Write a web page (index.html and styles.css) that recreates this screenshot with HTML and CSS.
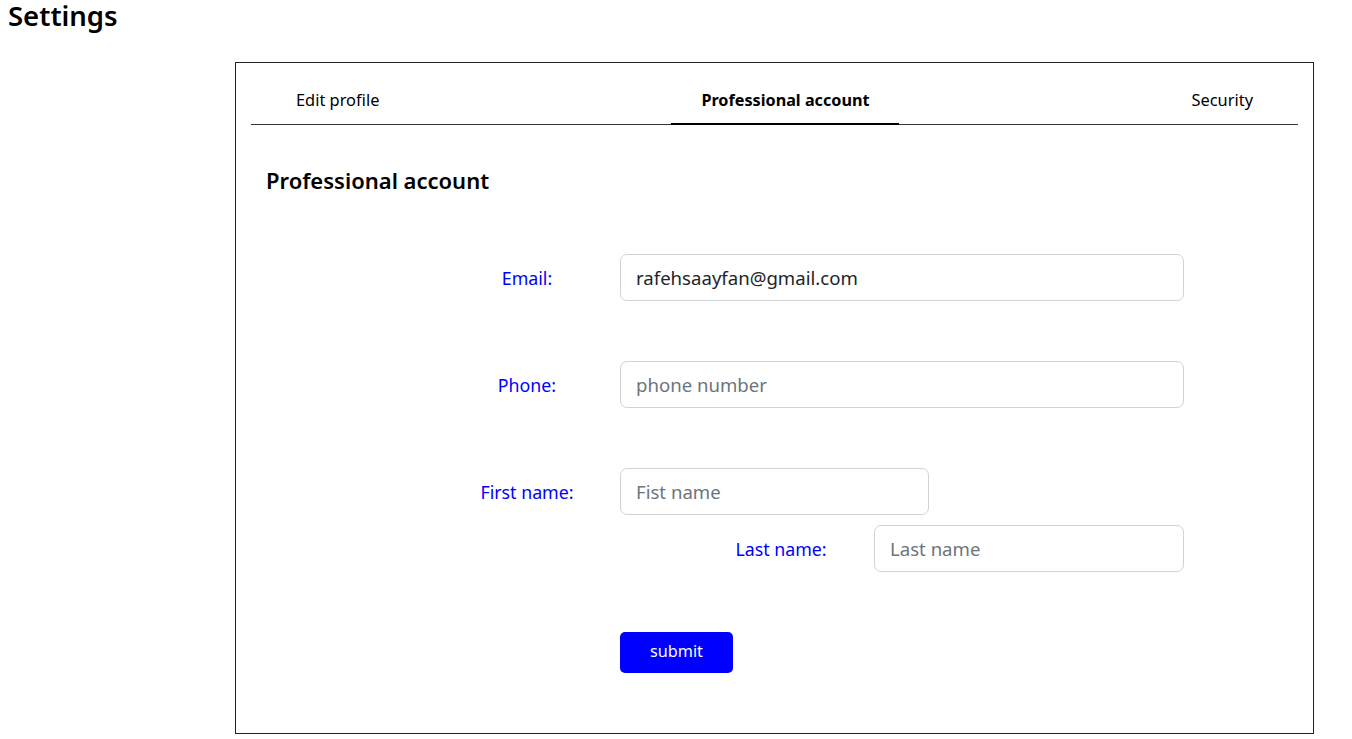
FILE: index.html
```html
<!DOCTYPE html>
<html lang="en">
<head>
<meta charset="utf-8">
<title>Settings</title>
<link rel="stylesheet" href="styles.css">
</head>
<body>
<h1 class="page-title">Settings</h1>
<div class="card">
  <nav class="tabs">
    <a class="tab">Edit profile</a>
    <a class="tab active">Professional account</a>
    <a class="tab">Security</a>
  </nav>
  <h2 class="section-title">Professional account</h2>
  <form class="form">
    <div class="row">
      <label class="label">Email:</label>
      <input class="input" type="text" value="rafehsaayfan@gmail.com">
    </div>
    <div class="row">
      <label class="label">Phone:</label>
      <input class="input" type="text" placeholder="phone number">
    </div>
    <div class="names">
      <div class="name-block first">
        <label class="label">First name:</label>
        <input class="input" type="text" placeholder="Fist name">
      </div>
      <div class="name-block last">
        <label class="label">Last name:</label>
        <input class="input" type="text" placeholder="Last name">
      </div>
    </div>
    <div class="actions">
      <button type="button" class="submit">submit</button>
    </div>
  </form>
</div>
</body>
</html>
```

FILE: styles.css
```css
* { box-sizing: border-box; }

body {
  margin: 0;
  font-family: "Noto Sans", "Open Sans", sans-serif;
  color: #000;
  background: #fff;
}

.page-title {
  margin: 0;
  padding: 0 8px;
  font-size: 27.5px;
  font-weight: 600;
  line-height: 31px;
}

.card {
  margin: 31px 0 0 235px;
  width: 1079px;
  height: 672px;
  border: 1px solid #222;
  padding: 0 15px;
}

.tabs {
  display: flex;
  justify-content: space-between;
  border-bottom: 1px solid #333;
  height: 62px;
  padding-top: 25px;
}

.tab {
  position: relative;
  padding: 0 45px;
  font-size: 16.4px;
  line-height: 24px;
  color: #000;
}

.tab.active {
  font-weight: 700;
  font-size: 16.2px;
}

.tab.active::after {
  content: "";
  position: absolute;
  left: 15px;
  right: 15px;
  bottom: -1px;
  height: 2px;
  background: #000;
}

.section-title {
  margin: 41px 0 0 15px;
  font-size: 22px;
  font-weight: 600;
  line-height: 28px;
}

.form {
  margin: 60px 0 0 183px;
  width: 750px;
}

.row {
  display: flex;
  align-items: center;
  margin-bottom: 60px;
}

.label {
  width: 186px;
  flex: none;
  text-align: center;
  color: #0000ff;
  font-size: 17.8px;
}

.input {
  flex: 1;
  min-width: 0;
  height: 47px;
  border: 1px solid #ced4da;
  border-radius: 7px;
  padding: 0 15px;
  font-family: inherit;
  font-size: 18.6px;
  color: #212529;
  background: #fff;
  outline: none;
}

.input::placeholder {
  color: #6c757d;
}

.names {
  display: flex;
  flex-wrap: wrap;
  row-gap: 10px;
}

.name-block {
  display: flex;
  align-items: center;
}

.name-block.first {
  width: 495px;
}

.name-block.last {
  width: 496px;
  margin-left: auto;
}

.actions {
  margin-top: 60px;
  padding-left: 186px;
}

.submit {
  width: 113px;
  height: 41px;
  border: none;
  border-radius: 5px;
  padding: 0 0 3px;
  background: #0000ff;
  color: #fff;
  font-family: inherit;
  font-size: 16.2px;
  cursor: pointer;
}
```
